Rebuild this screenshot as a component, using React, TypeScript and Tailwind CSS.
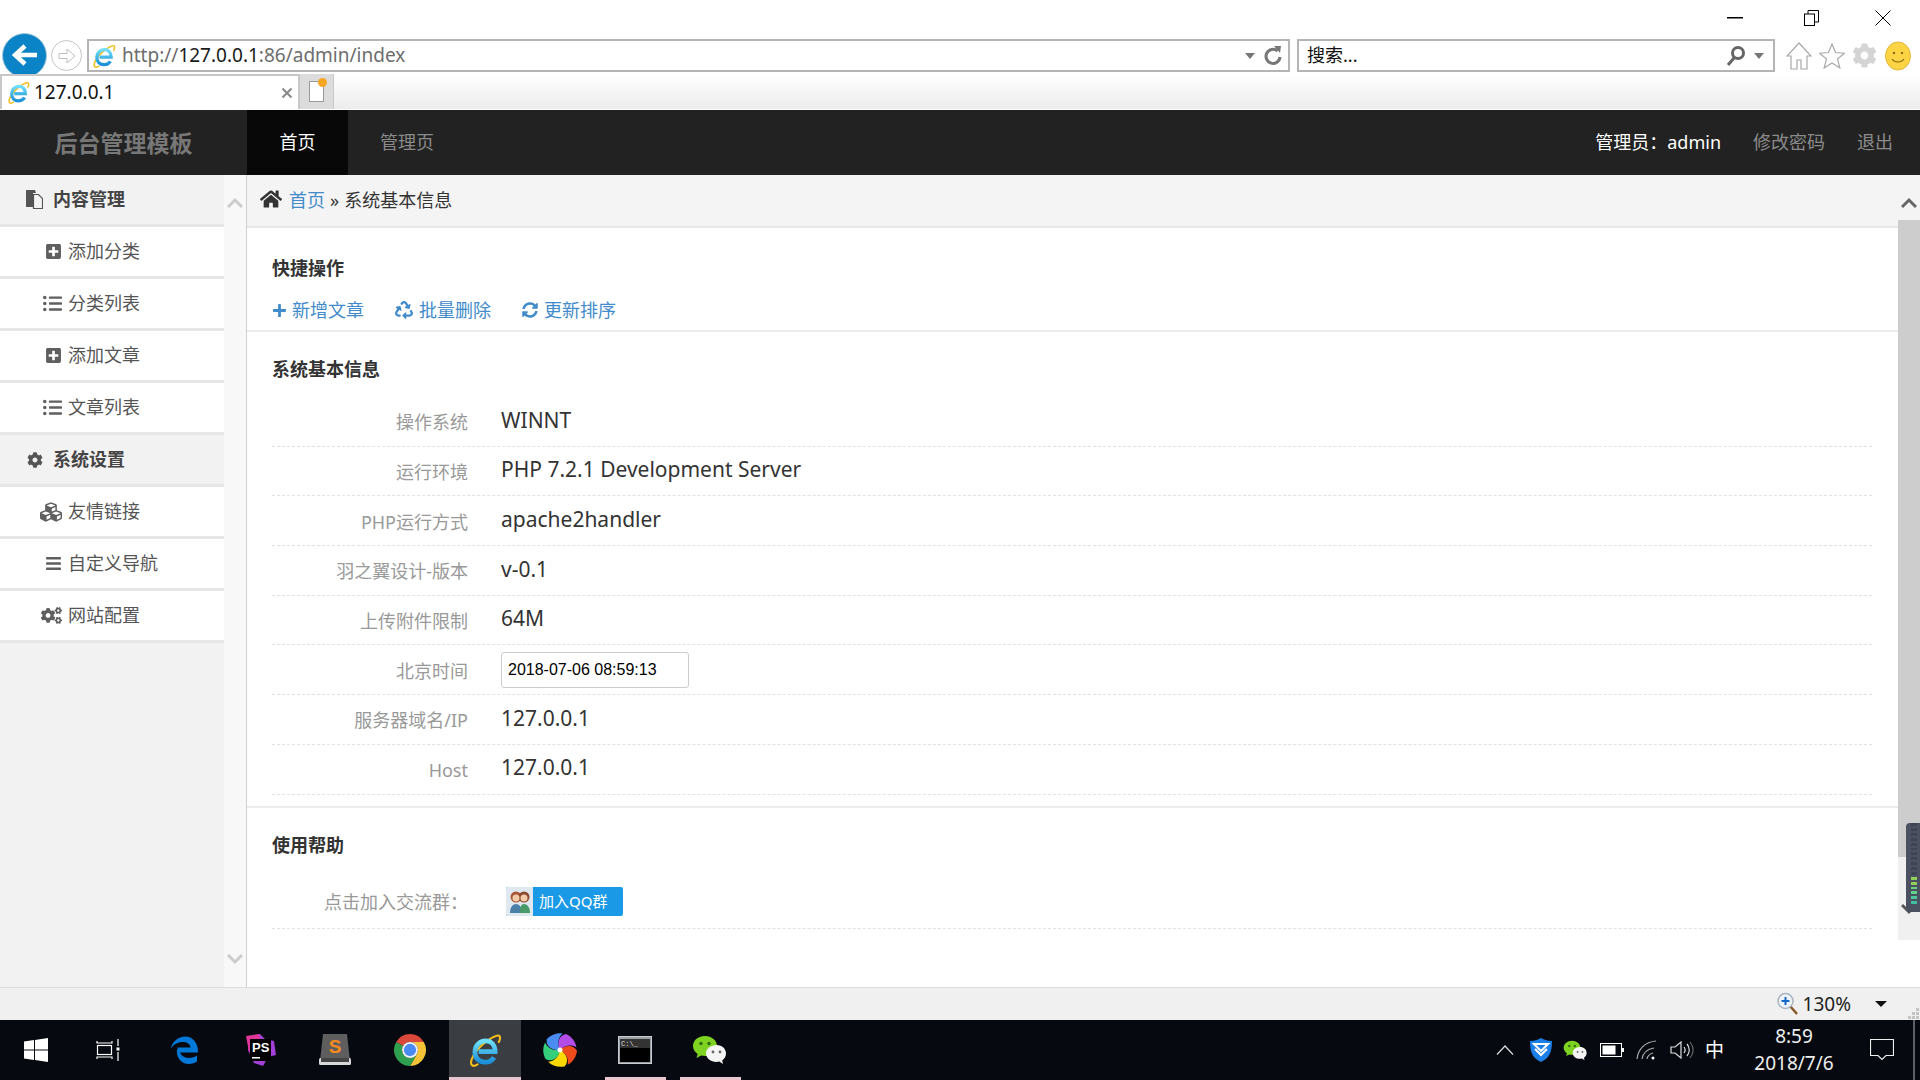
import React from "react";
import {
  FaHome,
  FaPlus,
  FaRecycle,
  FaSyncAlt,
  FaPlusSquare,
  FaListUl,
  FaCog,
  FaCubes,
  FaBars,
  FaCogs,
} from "react-icons/fa";

const IeLogo = ({ size = 24 }: { size?: number }) => (
  <svg width={size} height={size} viewBox="0 0 32 32" fill="none">
    <defs>
      <linearGradient id="ie-blue" x1="0" y1="0" x2="0" y2="1">
        <stop offset="0" stopColor="#6fe0fa" />
        <stop offset="1" stopColor="#1b8fd8" />
      </linearGradient>
    </defs>
    <path
      d="M9 29.5C3.5 33 1 29 4.5 22.5 9 13.5 20 4.5 27 2.5c3.5-1 4 2.5 2 6"
      stroke="#f3bd1e"
      strokeWidth="2"
      strokeLinecap="round"
    />
    <path
      d="M10 17.5h15.5c0-6.5-4-10-9-10-5.5 0-10 4.3-10 10.5 0 6 4.3 9.5 9.5 9.5 3.8 0 6.8-1.6 8.5-4.5"
      stroke="url(#ie-blue)"
      strokeWidth="4.5"
    />
  </svg>
);

const WeChatLogo = ({ size = 32 }: { size?: number }) => (
  <svg width={size} height={size} viewBox="0 0 36 32">
    <path d="M13 2C6.400 2 1 6.300 1 12c0 3.300 1.800 6 4.600 7.900L4.500 24l4.700-2.400c1.300.3 2.500.5 3.800.5C19.600 22.100 25 17.600 25 12S19.600 2 13 2z" fill="#7ed321" />
    <circle cx="9" cy="9.500" r="1.700" fill="#2f6a12" />
    <circle cx="17" cy="9.500" r="1.700" fill="#2f6a12" />
    <path d="M24.500 11C18.700 11 14 14.800 14 19.500S18.700 28 24.500 28c1 0 2-.1 2.900-.4l3.600 2.300-.8-3.500c2.300-1.600 3.800-4 3.800-6.900C34 14.800 30.300 11 24.500 11z" fill="#f4f4f4" />
    <circle cx="21" cy="18" r="1.400" fill="#666" />
    <circle cx="28" cy="18" r="1.400" fill="#666" />
  </svg>
);

const PhpStorm = () => (
  <svg width="36" height="36" viewBox="0 0 36 36">
    <path d="M6 5l12-3 5 5 9 2 2 14-8 2-5 9-9-3L6 18z" fill="#a13fd6" />
    <path d="M4 4l13-2 2 10L7 20z" fill="#e0369a" />
    <rect x="8" y="7" width="21" height="22" fill="#000" />
    <text x="10" y="20" fill="#fff" fontSize="13" fontWeight="700" fontFamily="Liberation Sans">
      PS
    </text>
    <rect x="10" y="25" width="8" height="1.500" fill="#fff" />
  </svg>
);

const Sublime = () => (
  <svg width="36" height="36" viewBox="0 0 36 36">
    <path d="M6 2h24l3 27H3z" fill="#5e5e5e" />
    <rect x="2" y="26" width="32" height="7" rx="1.500" fill="#d8d8d8" />
    <rect x="4" y="26" width="28" height="4" fill="#444" />
    <text x="18" y="21" textAnchor="middle" fill="#f58a1f" fontSize="19" fontWeight="700" fontFamily="Liberation Sans">
      S
    </text>
  </svg>
);

const Chrome = () => (
  <svg width="34" height="34" viewBox="0 0 32 32">
    <path d="M3 8.500A15 15 0 0 1 29 8.500L16 8.500A7.500 7.500 0 0 0 9.500 12.250Z" fill="#d9483b" />
    <path d="M29 8.500A15 15 0 0 1 16 31L22.500 19.750A7.500 7.500 0 0 0 16 8.500Z" fill="#f6c337" />
    <path d="M16 31A15 15 0 0 1 3 8.500L9.500 12.250A7.500 7.500 0 0 0 22.500 19.750Z" fill="#2e9f4f" />
    <circle cx="16" cy="16" r="7.500" fill="#f4f4f4" />
    <circle cx="16" cy="16" r="5.800" fill="#4a8af4" />
  </svg>
);

const Pinwheel = () => {
  const petals = ["#4a8cf0", "#b44ce8", "#ee4a1c", "#fbd900", "#35cf7c"];
  return (
    <svg width="36" height="36" viewBox="0 0 36 36">
      {petals.map((c, i) => (
        <path
          key={c}
          d="M18 18C12 13 11 5 17 1c6 0 12 3 15 8-5-1-11 2-14 9z"
          fill={c}
          transform={`rotate(${i * 72 - 48} 18 18)`}
        />
      ))}
      <circle cx="18" cy="18" r="2.500" fill="#fff" />
    </svg>
  );
};

const Cmd = () => (
  <svg width="34" height="28" viewBox="0 0 34 28">
    <rect x="0.500" y="0.500" width="33" height="27" fill="#9aa0a6" stroke="#c7cbd0" />
    <rect x="2" y="3" width="30" height="23" fill="#000" />
    <rect x="2" y="3" width="30" height="9" fill="#333" />
    <text x="3" y="10" fill="#ddd" fontSize="7" fontFamily="Liberation Mono">
      C:\_
    </text>
  </svg>
);

const Chevron = ({ up, className }: { up?: boolean; className: string }) => (
  <svg width="16" height="12" viewBox="0 0 16 12" className={className} fill="none" stroke="currentColor" strokeWidth="3">
    <path d={up ? "M1 10l7-7 7 7" : "M1 2l7 7 7-7"} />
  </svg>
);

const Toolbar = () => (
  <div className="relative h-[74px] bg-white">
    <div className="flex h-[36px] items-center justify-end">
      <svg width="16" height="2" className="mr-[61px]"><rect width="16" height="1.500" fill="#000" /></svg>
      <svg width="15" height="16" viewBox="0 0 15 16" className="mr-[56px]" fill="none" stroke="#000">
        <rect x="0.500" y="4" width="10" height="11.500" />
        <path d="M4 4V0.500h10.500V12H10.500" />
      </svg>
      <svg width="16" height="16" viewBox="0 0 16 16" className="mr-[29px]" stroke="#000">
        <path d="M0.500 0.500l15 15M15.500 0.500l-15 15" />
      </svg>
    </div>
    <div className="flex h-[33px] items-center mt-[3px]">
      <div className="ml-[2px] flex h-[45px] w-[45px] -mt-[1px] items-center justify-center rounded-full bg-[#0a84c6] border border-[#a8c8dc]">
        <svg width="26" height="24" viewBox="0 0 26 24" fill="none" stroke="#fff" strokeWidth="4.500">
          <path d="M13 3L3 12l10 9M3 12h22" />
        </svg>
      </div>
      <div className="ml-[4px] flex h-[31px] w-[31px] items-center justify-center rounded-full border border-[#c4c4c4]">
        <svg width="18" height="18" viewBox="0 0 18 18" fill="#fff" stroke="#c0c0c0">
          <path d="M1 6.500h8V2l8 7-8 7v-4.500H1z" />
        </svg>
      </div>
      <div className="ml-[5px] flex h-[33px] w-[1203px] items-center border-2 border-[#b4b4b4] pl-[3px]">
        <IeLogo size={24} />
        <span className="ml-[6px] text-[19px] text-[#6d6d6d]">
          http://<span className="text-[#1a1a1a]">127.0.0.1</span>:86/admin/index
        </span>
        <span className="ml-auto mr-[8px] h-0 w-0 border-x-[5px] border-t-[6px] border-x-transparent border-t-[#777]" />
        <svg width="20" height="22" viewBox="0 0 20 22" className="mr-[5px]" fill="none" stroke="#777" strokeWidth="3">
          <path d="M14.500 6A7 7 0 1 0 17 12" />
          <path d="M11 1l7 0-1 7z" fill="#777" strokeWidth="0" />
        </svg>
      </div>
      <div className="ml-[7px] flex h-[33px] w-[478px] items-center border-2 border-[#b4b4b4] pl-[8px]">
        <span className="text-[18px] text-[#111]">搜索...</span>
        <svg width="20" height="22" viewBox="0 0 20 22" className="ml-auto mr-[8px]" fill="none" stroke="#666" strokeWidth="3">
          <circle cx="12" cy="8" r="5.500" />
          <path d="M8 13l-6 7" />
        </svg>
        <span className="mr-[9px] h-0 w-0 border-x-[5px] border-t-[6px] border-x-transparent border-t-[#777]" />
      </div>
      <div className="ml-[11px] flex items-center gap-[7px]">
        <svg width="26" height="28" viewBox="0 0 26 28" fill="#fff" stroke="#a8a8a8" strokeWidth="1.200">
          <path d="M13 1L1 14h4v13h6v-9h4v9h6V14h4z" />
        </svg>
        <svg width="26" height="28" viewBox="0 0 26 28" fill="#fff" stroke="#a8a8a8" strokeWidth="1.200">
          <path d="M13 2l3.500 8.500 9 .7-7 5.800 2.300 9L13 21l-7.800 5 2.300-9-7-5.800 9-.7z" />
        </svg>
        <FaCog size={25} className="text-[#d4d4d4]" />
        <svg width="26" height="30" viewBox="0 0 26 30" className="ml-[1px]">
          <ellipse cx="13" cy="15" rx="12.500" ry="14" fill="#fdd443" stroke="#e0b63a" />
          <circle cx="9" cy="12" r="1.200" fill="#8a6d10" />
          <circle cx="17" cy="12" r="1.200" fill="#8a6d10" />
          <path d="M7 18c3 4 9 4 12 0" fill="none" stroke="#8a6d10" strokeWidth="1.200" />
        </svg>
      </div>
    </div>
  </div>
);

const TabRow = () => (
  <div className="relative flex h-[36px] border-b border-white bg-gradient-to-b from-white to-[#ececec]">
    <div className="flex h-[35px] w-[300px] items-center border-2 border-b-0 border-[#c8c8c8] bg-white pl-[5px]">
      <IeLogo size={23} />
      <span className="ml-[4px] text-[19px] text-[#111]">127.0.0.1</span>
      <svg width="12" height="12" viewBox="0 0 12 12" className="ml-auto mr-[5px]" stroke="#8c8c8c" strokeWidth="2.200">
        <path d="M1.500 1.500l9 9M10.500 1.500l-9 9" />
      </svg>
    </div>
    <div className="flex h-[35px] w-[34px] items-center justify-center bg-[#dcdcdc] border-r border-[#c8c8c8]">
      <div className="relative h-[21px] w-[15px] border border-[#999] bg-white">
        <span className="absolute -right-[4px] -top-[4px] h-[9px] w-[9px] rounded-full bg-[#f5a623]" />
      </div>
    </div>
  </div>
);

const TopNav = () => (
  <div className="flex h-[65px] items-center bg-[#222] text-[18px]">
    <div className="flex w-[247px] justify-center pt-[2px] text-[23px] font-bold text-[#777]">后台管理模板</div>
    <div className="flex h-full w-[101px] items-center justify-center bg-[#080808] text-white">首页</div>
    <div className="ml-[32px] text-[#8a8a8a]">管理页</div>
    <div className="ml-auto text-white">管理员：admin</div>
    <div className="ml-[32px] text-[#8a8a8a]">修改密码</div>
    <div className="ml-[32px] mr-[27px] text-[#8a8a8a]">退出</div>
  </div>
);

const menu: { label: string; icon?: React.ReactNode; header?: boolean }[] = [
  {
    label: "内容管理",
    header: true,
    icon: (
      <svg width="17" height="19" viewBox="0 0 17 19">
        <path d="M0 0h9l1 3h-3v14H0z" fill="#555" />
        <path d="M7.500 4.500h5l4 4v10h-9z" fill="#f4f4f4" stroke="#555" strokeWidth="1.200" />
      </svg>
    ),
  },
  { label: "添加分类", icon: <FaPlusSquare size={17} /> },
  { label: "分类列表", icon: <FaListUl size={19} /> },
  { label: "添加文章", icon: <FaPlusSquare size={17} /> },
  { label: "文章列表", icon: <FaListUl size={19} /> },
  { label: "系统设置", header: true, icon: <FaCog size={16} /> },
  { label: "友情链接", icon: <FaCubes size={22} /> },
  { label: "自定义导航", icon: <FaBars size={17} /> },
  { label: "网站配置", icon: <FaCogs size={21} /> },
];

const Sidebar = () => (
  <div className="flex h-full w-[247px] shrink-0 border-r border-[#cfcfcf]">
    <div className="flex h-full w-[224px] flex-col bg-[#f2f2f2]">
      {menu.map((m) =>
        m.header ? (
          <div
            key={m.label}
            className="flex h-[52px] items-center border-b-[3px] border-[#e6e6e6] bg-[#f2f2f2] font-bold text-[#444]"
          >
            <span className="flex w-[53px] justify-end pr-[10px] text-[#555]">{m.icon}</span>
            <span className="text-[18px]">{m.label}</span>
          </div>
        ) : (
          <div
            key={m.label}
            className="flex h-[52px] items-center border-b-[3px] border-[#e6e6e6] bg-white text-[#555]"
          >
            <span className="flex w-[62px] justify-end text-[#5f5f5f]">{m.icon}</span>
            <span className="ml-[6px] text-[18px]">{m.label}</span>
          </div>
        )
      )}
    </div>
    <div className="flex w-[22px] flex-col items-center justify-between bg-[#f8f8f8] pb-[22px] pt-[22px]">
      <Chevron up className="text-[#ccc]" />
      <Chevron className="text-[#ccc]" />
    </div>
  </div>
);

const InfoRow = ({ label, children }: { label: string; children: React.ReactNode }) => (
  <div className="flex h-[49.7px] items-center border-b border-dashed border-[#e2e2e2]">
    <div className="mt-[3px] w-[196px] text-right text-[18px] text-[#999]">{label}</div>
    <div className="mb-[2px] ml-[33px] text-[21px] text-[#333]">{children}</div>
  </div>
);

const MainPanel = () => (
  <div className="relative flex h-full min-w-0 flex-1">
    <div className="flex min-w-0 flex-1 flex-col">
      <div className="flex h-[53px] shrink-0 items-center border-b-2 border-[#e8e8e8] bg-[#f4f4f4] pl-[13px] text-[18px] text-[#333]">
        <FaHome size={22} className="mb-[3px]" />
        <span className="ml-[7px] text-[#428bca]">首页</span>
        <span className="mx-[5px]">»</span>
        <span>系统基本信息</span>
      </div>
      <div className="h-[712px] overflow-hidden bg-white">
        <div className="h-[104px] border-b-2 border-[#ececec] px-[25px] pt-[22px]">
          <div className="text-[18px] font-bold leading-[36px] text-[#333]">快捷操作</div>
          <div className="mt-[6px] flex items-center text-[18px] leading-[36px] text-[#428bca]">
            <FaPlus size={15} />
            <span className="ml-[5px]">新增文章</span>
            <FaRecycle size={18} className="ml-[31px]" />
            <span className="ml-[6px]">批量删除</span>
            <FaSyncAlt size={16} className="ml-[31px]" />
            <span className="ml-[6px]">更新排序</span>
          </div>
        </div>
        <div className="h-[476px] border-b-2 border-[#ececec] px-[25px] pt-[22px]">
          <div className="text-[18px] font-bold leading-[30px] text-[#333]">系统基本信息</div>
          <div className="mt-[13px] w-[1600px]">
            <InfoRow label="操作系统">WINNT</InfoRow>
            <InfoRow label="运行环境">PHP 7.2.1 Development Server</InfoRow>
            <InfoRow label="PHP运行方式">apache2handler</InfoRow>
            <InfoRow label="羽之翼设计-版本">v-0.1</InfoRow>
            <InfoRow label="上传附件限制">64M</InfoRow>
            <InfoRow label="北京时间">
              <input
                readOnly
                value="2018-07-06 08:59:13"
                className="mt-[2px] block h-[36px] w-[188px] rounded-[3px] border border-[#ccc] bg-white pl-[6px] text-[16px] text-black [font-family:'Liberation_Sans',sans-serif]"
              />
            </InfoRow>
            <InfoRow label="服务器域名/IP">127.0.0.1</InfoRow>
            <InfoRow label="Host">127.0.0.1</InfoRow>
          </div>
        </div>
        <div className="px-[25px] pt-[22px]">
          <div className="text-[18px] font-bold leading-[30px] text-[#333]">使用帮助</div>
          <div className="mt-[14px] w-[1600px]">
            <div className="flex h-[55px] items-center border-b border-dashed border-[#e2e2e2]">
              <div className="mt-[2px] w-[196px] text-right text-[18px] text-[#999]">点击加入交流群：</div>
              <div className="ml-[38px] flex h-[29px] w-[117px] items-center overflow-hidden rounded-[2px] bg-[#1a9ae6]">
                <div className="flex h-full w-[27px] items-center justify-center bg-[#dfe8ee]">
                  <svg width="24" height="26" viewBox="0 0 24 26">
                    <circle cx="8" cy="9" r="5.500" fill="#a8583a" />
                    <circle cx="16" cy="9" r="5.500" fill="#8a4a30" />
                    <circle cx="8" cy="10" r="3.500" fill="#f4cba8" />
                    <circle cx="16" cy="10" r="3.500" fill="#f4cba8" />
                    <path d="M2 25c0-6 3-9 6-9s6 3 6 9z" fill="#4a7fa8" />
                    <path d="M12 25c0-6 1-9 4-9s6 3 6 9z" fill="#4a9a68" />
                  </svg>
                </div>
                <span className="ml-[6px] text-[15px] text-white">加入QQ群</span>
              </div>
            </div>
            <div className="flex h-[50px] items-center">
              <div className="w-[196px]" />
              <div className="ml-[38px] text-[18px] text-[#428bca]">http://www.yuzhiyi-design.com/about</div>
            </div>
          </div>
        </div>
      </div>
    </div>
    <div className="flex h-[765px] w-[22px] shrink-0 flex-col bg-[#f0f0f0]">
      <div className="flex h-[45px] items-center justify-center bg-[#f4f4f4] pt-[10px]">
        <Chevron up className="text-[#666]" />
      </div>
      <div className="h-[637px] bg-[#cdcdcd]" />
      <div className="flex flex-1 items-start justify-center pt-[46px]">
        <Chevron className="text-[#555]" />
      </div>
    </div>
    {/* floating widget over the scrollbar */}
    <div className="absolute right-0 top-[648px] flex h-[89px] w-[14px] flex-col justify-end gap-[2px] rounded-l-[4px] bg-[#4b5160] pb-[8px] pl-[5px]">
      {["#3e4453", "#3e4453", "#3e4453", "#3e4453", "#3e4453", "#3e4453", "#3e4453", "#3e4453", "#3e4453", "#3e4453", "#3e4453", "#8fcf5a", "#8fcf5a", "#6fcf7a", "#5fcf8a", "#4fc79a", "#3fbfa0"].map((c, i) => (
        <span key={i} className="h-[3px] w-[6px]" style={{ backgroundColor: c }} />
      ))}
    </div>
  </div>
);

const StatusBar = () => (
  <div className="relative flex h-[33px] items-center justify-end border-t border-[#dcdcdc] bg-[#f0f0f0]">
    <svg width="22" height="24" viewBox="0 0 22 24" fill="none">
      <path d="M13 14l7 8" stroke="#8a5a2a" strokeWidth="2.500" />
      <circle cx="8.500" cy="9" r="7.500" fill="#eef4fa" stroke="#a8b4c0" strokeWidth="1.500" />
      <path d="M4.500 9h8M8.500 5v8" stroke="#1668c8" strokeWidth="2" />
    </svg>
    <span className="ml-[4px] text-[19px] text-[#222]">130%</span>
    <span className="ml-[24px] mr-[33px] h-0 w-0 border-x-[6px] border-t-[6px] border-x-transparent border-t-[#111]" />
    <div className="absolute bottom-[1px] right-[1px] grid grid-cols-3 gap-[1px]">
      {[0, 0, 1, 0, 1, 1, 1, 1, 1].map((v, i) => (
        <span key={i} className={v ? "h-[3px] w-[3px] bg-[#c4c4c4]" : "h-[3px] w-[3px]"} />
      ))}
    </div>
  </div>
);

const TaskItem = ({ children, active, open }: { children: React.ReactNode; active?: boolean; open?: boolean }) => (
  <div className={`relative flex h-full w-[72px] items-center justify-center ${active ? "bg-[#3a3d42]" : ""}`}>
    {children}
    {active && <span className="absolute inset-x-0 bottom-0 h-[3px] bg-[#e8c5cf]" />}
    {open && <span className="absolute bottom-0 left-[6px] right-[5px] h-[3px] bg-[#e8c5cf]" />}
  </div>
);

const Taskbar = () => (
  <div className="flex h-[60px] items-center bg-[#060a10] text-white">
    <div className="flex h-full w-[72px] items-center justify-center">
      <svg width="24" height="24" viewBox="0 0 24 24" fill="#fff">
        <path d="M0 3.500l10-1.400v9.400H0zM11 2l13-2v11.500H11zM0 12.500h10v9.400L0 20.500zM11 12.500h13V24l-13-2z" />
      </svg>
    </div>
    <div className="flex h-full w-[72px] items-center justify-center">
      <svg width="24" height="24" viewBox="0 0 24 24" fill="none" stroke="#fff" strokeWidth="1.200">
        <path d="M1 3v2h15V3M1 21v-2h15v2M22 1v7M22 14v9" />
        <rect x="1.500" y="7.500" width="14" height="9" />
        <rect x="20.500" y="9.500" width="3" height="3" fill="#fff" stroke="none" />
      </svg>
    </div>
    <div className="ml-[5px] flex h-full items-center gap-[3px]">
      <TaskItem>
        <svg width="32" height="32" viewBox="0 0 32 32" fill="none">
          <path d="M9 18.500h20c.5-9-5-16-12.500-16C9 2.500 3 8 1.500 15 5 9.500 10 8 14 8c4.500 0 7.500 2.500 7.500 5.500H8.500" fill="#0078d7" />
          <path d="M8 15c-1 8 3.500 15 12 15 3 0 6-1 8-2.500v-6c-2 1.500-5 2.500-8 2.500-5 0-9-3-9-7z" fill="#0078d7" />
        </svg>
      </TaskItem>
      <TaskItem><PhpStorm /></TaskItem>
      <TaskItem><Sublime /></TaskItem>
      <TaskItem><Chrome /></TaskItem>
      <TaskItem active><IeLogo size={34} /></TaskItem>
      <TaskItem><Pinwheel /></TaskItem>
      <TaskItem open><Cmd /></TaskItem>
      <TaskItem open><WeChatLogo size={36} /></TaskItem>
    </div>
    <div className="ml-auto flex h-full items-center">
      <svg width="18" height="10" viewBox="0 0 18 10" fill="none" stroke="#ddd" strokeWidth="1.200">
        <path d="M1 9.500L9 1l8 8.500" />
      </svg>
      <svg width="24" height="26" viewBox="0 0 24 26" className="ml-[15px]">
        <path d="M12 1c3 2 7 3 11 3 0 10-2 17-11 21C3 21 1 14 1 4c4 0 8-1 11-3z" fill="#1b7fe8" />
        <path d="M5 7h14l-7 7zM6 12l6 6 6-6" fill="none" stroke="#fff" strokeWidth="2" />
      </svg>
      <span className="ml-[10px] flex"><WeChatLogo size={25} /></span>
      <svg width="24" height="14" viewBox="0 0 24 14" className="ml-[12px]" fill="none">
        <rect x="0.500" y="0.500" width="21" height="13" stroke="#fff" />
        <rect x="2.500" y="2.500" width="13" height="9" fill="#fff" />
        <rect x="22" y="5" width="2" height="4" fill="#fff" />
      </svg>
      <svg width="22" height="20" viewBox="0 0 22 20" className="ml-[12px]" fill="none" stroke="#aaa" strokeWidth="1.200">
        <path d="M1 19C2 9 9 2 20 1M6 19c1-6 5-10 12-11M11 19c.5-3 2.500-5 6-6" />
        <circle cx="17" cy="18" r="1.500" fill="#fff" stroke="none" />
      </svg>
      <svg width="24" height="20" viewBox="0 0 24 20" className="ml-[12px]" fill="none" stroke="#ddd" strokeWidth="1.200">
        <path d="M1 7v6h4l6 5V2L5 7z" />
        <path d="M14 7c1.500 2 1.500 4 0 6M17 4c3 3.500 3 8.500 0 12" />
        <path d="M20 2c4 5 4 11 0 16" stroke="#666" />
      </svg>
      <span className="ml-[11px] text-[19px] text-white">中</span>
      <div className="ml-[22px] flex w-[96px] flex-col items-center text-[19px] leading-[27px] text-[#eee]">
        <span>8:59</span>
        <span>2018/7/6</span>
      </div>
      <svg width="24" height="24" viewBox="0 0 24 24" className="ml-[28px]" fill="none" stroke="#eee" strokeWidth="1.200">
        <path d="M0.500 1.500h23v16H16l-4 4-4-4H0.500z" />
      </svg>
      <span className="ml-[19px] h-full w-[2px] bg-[#5b5f66]" />
      <span className="w-[5px]" />
    </div>
  </div>
);

export default function App() {
  return (
    <div className="flex h-screen w-screen flex-col overflow-hidden bg-white [font-family:'Noto_Sans','Noto_Sans_CJK_SC',sans-serif]">
      <Toolbar />
      <TabRow />
      <TopNav />
      <div className="flex min-h-0 flex-1 bg-white">
        <Sidebar />
        <MainPanel />
      </div>
      <StatusBar />
      <Taskbar />
    </div>
  );
}
